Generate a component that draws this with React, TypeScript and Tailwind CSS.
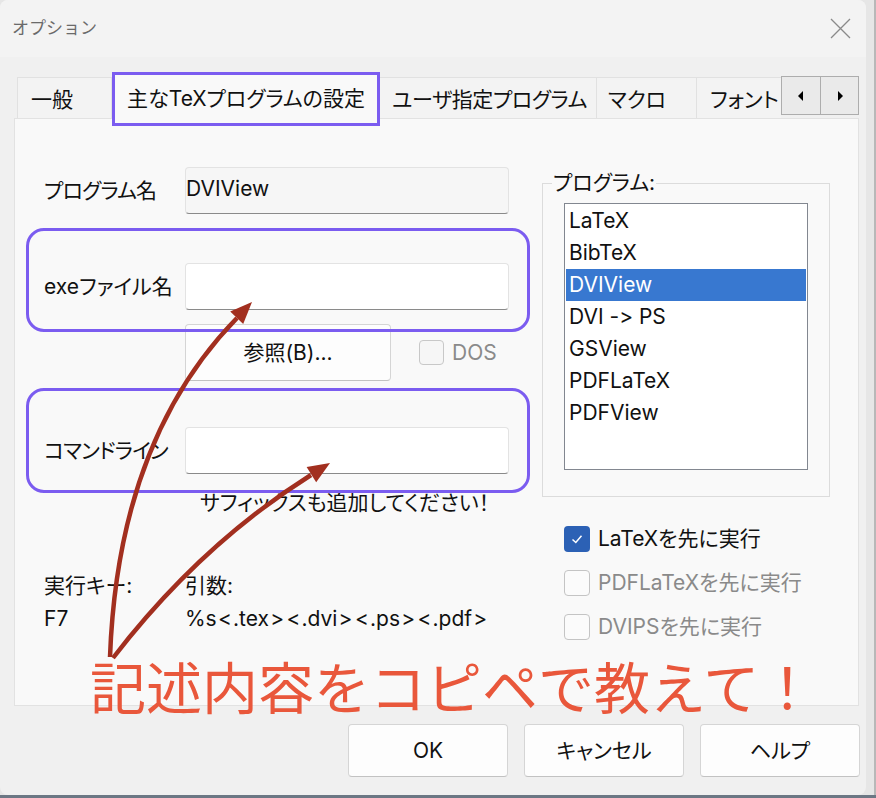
import React from "react";

const items = ["LaTeX", "BibTeX", "DVIView", "DVI -> PS", "GSView", "PDFLaTeX", "PDFView"];

function Input({ bg }: { bg: string }) {
  return (
    <div
      className={
        "w-[324px] h-[47px] rounded-[4px] border border-[#e3e3e3] border-b-[#8a8a8a] flex items-center px-[8px] " + bg
      }
    />
  );
}

function Check({ checked, label, disabled }: { checked?: boolean; label: string; disabled?: boolean }) {
  return (
    <div className="h-[44px] flex items-center">
      {checked ? (
        <div className="w-[26px] h-[26px] rounded-[4px] bg-[#2c61b5] flex items-center justify-center">
          <svg width="14" height="14" viewBox="0 0 14 14">
            <path d="M2.5 7.5 L5.8 10.5 L11.5 3.8" fill="none" stroke="#ffffff" strokeWidth="1.5" />
          </svg>
        </div>
      ) : (
        <div className="w-[26px] h-[26px] rounded-[4px] border border-[#c4c4c4] bg-[#fbfbfb]" />
      )}
      <span className={"ml-[8px] text-[21px] " + (disabled ? "text-[#8a8a8a]" : "text-[#111111]")}>{label}</span>
    </div>
  );
}

const B = ({ c }: { c: string }) => <span className="px-[1.2px]">{c}</span>;

export default function App() {
  return (
    <div className="relative w-[876px] h-[798px] overflow-hidden bg-[#e6e6e6] font-['Inter','Noto_Sans_CJK_JP',sans-serif] [font-feature-settings:'palt','calt'_0,'liga'_0] text-[#111111]">
      <div className="flex h-[795px]">
        <div className="w-[866px] h-full rounded-[8px] bg-[#f0f0f0] flex flex-col overflow-hidden">
          {/* title bar */}
          <div className="h-[57px] shrink-0 bg-[#f3f3f3] flex items-center justify-between pl-[12px] pr-[15px]">
            <span className="text-[17px] text-[#6a6a6a] [font-feature-settings:normal]">オプション</span>
            <svg width="21" height="21" viewBox="0 0 21 21">
              <path d="M1 1 L20 20 M20 1 L1 20" stroke="#8a8a8a" strokeWidth="1.3" fill="none" />
            </svg>
          </div>

          <div className="pl-[14px] pt-[20px]">
            {/* tabs */}
            <div className="flex h-[41px] w-[845px]">
              <div className="flex flex-1 min-w-0 overflow-x-clip pl-[3px]">
                <div className="w-[95px] shrink-0 h-[41px] border border-b-0 border-[#e1e1e1] bg-[#f3f3f3] pl-[13px] pt-[3px] flex items-center text-[21px]">
                  一般
                </div>
                <div className="relative z-10 w-[268px] shrink-0 -mt-[5px] h-[54px] border-[3px] border-[#7b5cf0] bg-[#f9f9f9] flex items-center justify-center text-[21px]">
                  主なTeXプログラムの設定
                </div>
                <div className="w-[217px] shrink-0 h-[41px] border-r border-t border-[#e1e1e1] bg-[#f3f3f3] pl-[12px] pt-[3px] flex items-center text-[21px] tracking-[-0.4px]">
                  ユーザ指定プログラム
                </div>
                <div className="w-[100px] shrink-0 h-[41px] border-r border-t border-[#e1e1e1] bg-[#f3f3f3] pl-[11px] pt-[3px] flex items-center text-[21px]">
                  マクロ
                </div>
                <div className="w-[110px] shrink-0 h-[41px] border-r border-t border-[#e1e1e1] bg-[#f3f3f3] pl-[13px] pt-[3px] flex items-center text-[21px]">
                  フォント
                </div>
              </div>
              <div className="flex h-[39px] -mt-[1px] shrink-0">
                <div className="w-[40px] h-full border border-[#adadad] bg-[#eaeaea] flex items-center justify-center">
                  <svg width="6" height="10" viewBox="0 0 6 10"><path d="M5 0 L0 5 L5 10 Z" fill="#000" /></svg>
                </div>
                <div className="w-[38px] h-full border border-l-0 border-[#adadad] bg-[#eaeaea] flex items-center justify-center">
                  <svg width="6" height="10" viewBox="0 0 6 10"><path d="M1 0 L6 5 L1 10 Z" fill="#000" /></svg>
                </div>
              </div>
            </div>

            {/* panel */}
            <div className="w-[845px] h-[588px] border border-[#e2e2e2] bg-[#f9f9f9] flex">
              {/* left column */}
              <div className="w-[527px] shrink-0 pl-[29px] pt-[48px] flex flex-col text-[21px]">
                <div className="flex items-center">
                  <span className="w-[141px] shrink-0 tracking-[-0.8px]">プログラム名</span>
                  <div className="w-[324px] h-[47px] rounded-[4px] border border-[#e3e3e3] border-b-[#8a8a8a] bg-[#f6f6f6] flex items-center pl-[0px] pb-[4px] text-[21px]">
                    DVIView
                  </div>
                </div>
                <div className="flex items-center mt-[49px]">
                  <span className="w-[141px] shrink-0">exeファイル名</span>
                  <Input bg="bg-white" />
                </div>
                <div className="flex items-center mt-[14px] pl-[141px]">
                  <div className="w-[206px] h-[57px] rounded-[4px] border border-[#d5d5d5] border-b-[#c2c2c2] bg-[#fdfdfd] flex items-center justify-center">
                    参照(B)...
                  </div>
                  <div className="ml-[28px] w-[25px] h-[25px] rounded-[4px] border border-[#c8c8c8] bg-[#f6f6f6]" />
                  <span className="ml-[8px] text-[#8a8a8a]">DOS</span>
                </div>
                <div className="flex items-center mt-[46px]">
                  <span className="w-[141px] shrink-0 tracking-[-0.8px]">コマンドライン</span>
                  <Input bg="bg-white" />
                </div>
                <div className="mt-[15px] pl-[156px] leading-[28px]">サフィックスも追加してください！</div>
                <div className="mt-[52px] grid grid-cols-[141px_1fr] leading-[33px]">
                  <span>実行キー:</span>
                  <span>引数:</span>
                  <span>F7</span>
                  <span>
                    %s<B c="<" />.tex<B c=">" /><B c="<" />.dvi<B c=">" /><B c="<" />.ps<B c=">" /><B c="<" />.pdf<B c=">" />
                  </span>
                </div>
              </div>

              {/* right column */}
              <div className="w-[288px] shrink-0 pt-[50px] flex flex-col">
                <fieldset className="border border-[#dcdcdc] pb-[26px]">
                  <legend className="ml-[9px] px-[1px] text-[21px] leading-[28px]">プログラム:</legend>
                  <div className="ml-[21px] mt-[6px] w-[244px] h-[267px] border border-[#828790] bg-white p-[1px] flex flex-col">
                    {items.map((it) => (
                      <div
                        key={it}
                        className={
                          "h-[32px] shrink-0 flex items-center pl-[3px] text-[21px] " +
                          (it === "DVIView" ? "bg-[#3878d0] text-white" : "text-[#111111]")
                        }
                      >
                        {it}
                      </div>
                    ))}
                  </div>
                </fieldset>
                <div className="mt-[20px] pl-[22px] flex flex-col">
                  <Check checked label="LaTeXを先に実行" />
                  <Check label="PDFLaTeXを先に実行" disabled />
                  <Check label="DVIPSを先に実行" disabled />
                </div>
              </div>
            </div>
          </div>

          {/* buttons */}
          <div className="mt-[18px] pr-[6px] flex justify-end gap-[16px] text-[21px]">
            <div className="w-[160px] h-[53px] rounded-[4px] border border-[#d5d5d5] border-b-[#c2c2c2] bg-[#fdfdfd] flex items-center justify-center">OK</div>
            <div className="w-[160px] h-[53px] rounded-[4px] border border-[#d5d5d5] border-b-[#c2c2c2] bg-[#fdfdfd] flex items-center justify-center">キャンセル</div>
            <div className="w-[160px] h-[53px] rounded-[4px] border border-[#d5d5d5] border-b-[#c2c2c2] bg-[#fdfdfd] flex items-center justify-center">ヘルプ</div>
          </div>
        </div>
        <div className="flex-1 flex justify-end">
          <div className="w-[2px] h-full bg-[#b8b8b8]" />
        </div>
      </div>
      <div className="h-[3px] bg-[#6c7784]" />

      {/* annotations */}
      <div className="absolute left-[26px] top-[228px] w-[504px] h-[104px] rounded-[18px] border-[3px] border-[#7b5cf0] pointer-events-none" />
      <div className="absolute left-[26px] top-[388px] w-[504px] h-[105px] rounded-[18px] border-[3px] border-[#7b5cf0] pointer-events-none" />
      <svg className="absolute left-0 top-0 pointer-events-none" width="876" height="798" viewBox="0 0 876 798">
        <path d="M110 657 Q118 440 237 318" fill="none" stroke="#a22f1f" strokeWidth="4.5" />
        <path d="M252 302 L243.2 324.1 L230.2 311.5 Z" fill="#a22f1f" />
        <path d="M113 658 Q200 545 311 475" fill="none" stroke="#a22f1f" strokeWidth="4.5" />
        <path d="M330 463 L316.2 482.3 L306.6 467.1 Z" fill="#a22f1f" />
      </svg>
      <div className="absolute left-[90px] top-[661px] text-[56px] leading-none text-[#e9573b] whitespace-nowrap pointer-events-none [font-feature-settings:normal]">
        記述内容をコピペで教えて！
      </div>
    </div>
  );
}
